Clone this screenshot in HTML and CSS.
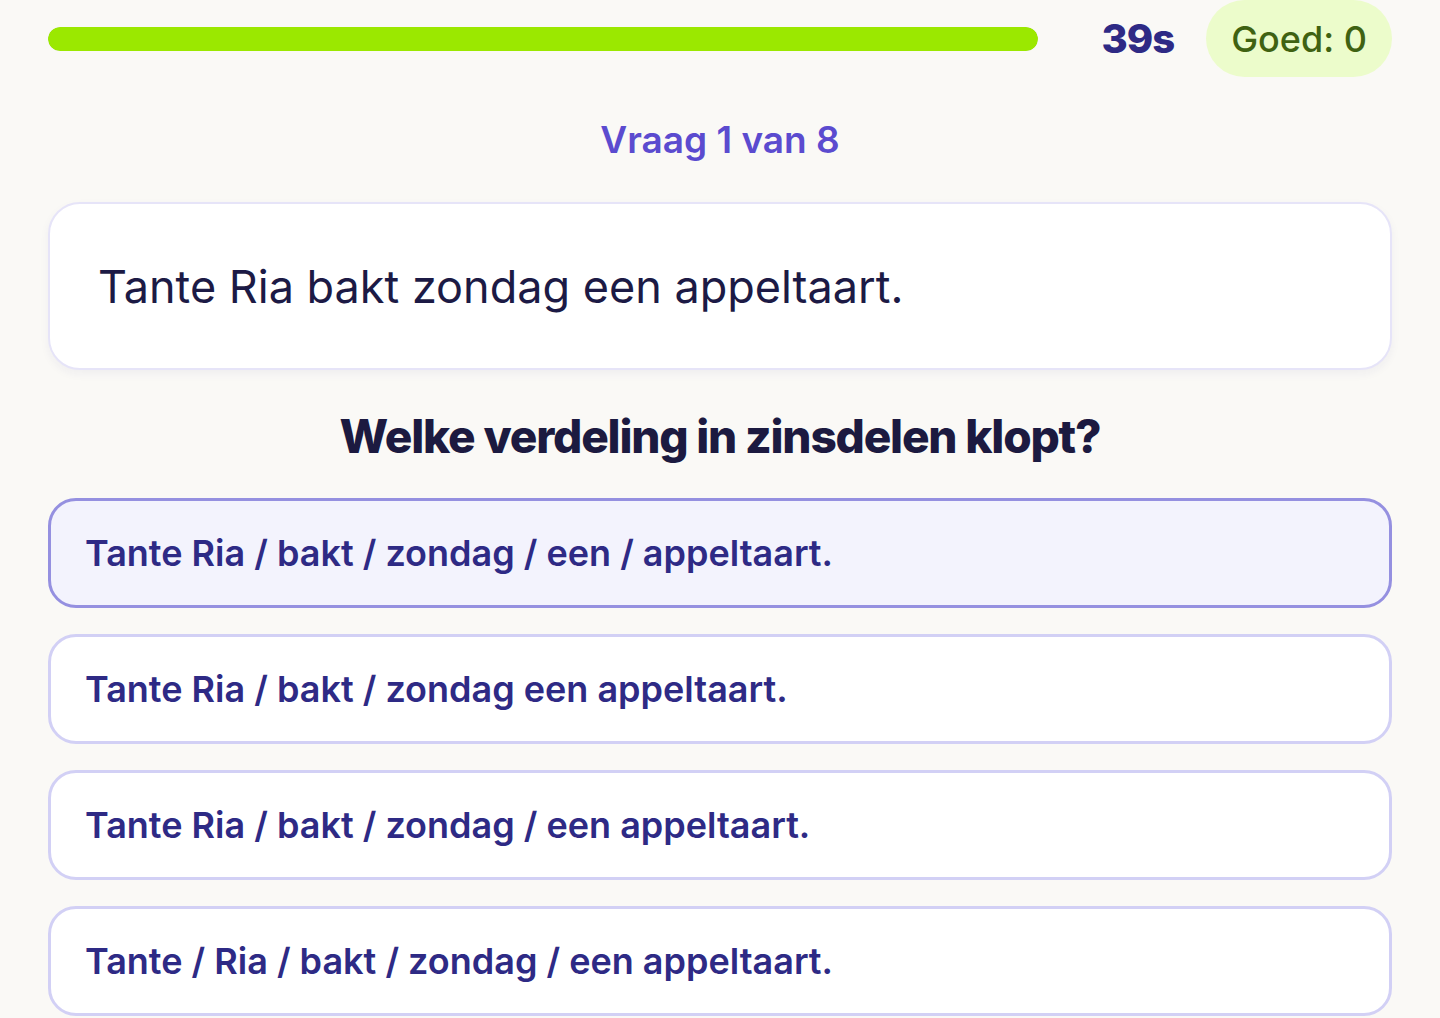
FILE: index.html
```
<!DOCTYPE html>
<html lang="nl">
<head>
    <meta charset="UTF-8">
    <title>Zinsdelen quiz</title>
    <link rel="stylesheet" href="styles.css">
</head>
<body>
<div class="quiz">
    <div class="top-bar">
        <div class="progress">
            <div class="progress-fill" style="width: 100%"></div>
        </div>
        <span class="timer">39s</span>
        <span class="score">Goed: 0</span>
    </div>

    <p class="counter">Vraag 1 van 8</p>

    <div class="sentence-card">Tante Ria bakt zondag een appeltaart.</div>

    <h2 class="prompt">Welke verdeling in zinsdelen klopt?</h2>

    <ul class="options">
        <li class="option selected">Tante Ria / bakt / zondag / een / appeltaart.</li>
        <li class="option">Tante Ria / bakt / zondag een appeltaart.</li>
        <li class="option">Tante Ria / bakt / zondag / een appeltaart.</li>
        <li class="option">Tante / Ria / bakt / zondag / een appeltaart.</li>
    </ul>
</div>
</body>
</html>
```

FILE: styles.css
```
html, body {
    margin: 0;
    padding: 0;
}

body {
    background-color: #faf9f6;
    font-family: Inter, "Noto Sans", sans-serif;
    color: #1c1a45;
}

.quiz {
    padding: 0 48px;
}

.top-bar {
    display: flex;
    align-items: center;
    height: 77px;
}

.progress {
    flex: 1;
    height: 24px;
    border-radius: 12px;
    background-color: #e8e6f0;
    overflow: hidden;
}

.progress-fill {
    height: 100%;
    border-radius: 12px;
    background-color: #9be800;
}

.timer {
    margin-left: 64px;
    font-size: 40px;
    font-weight: 800;
    letter-spacing: -1px;
    color: #2e2a85;
}

.score {
    display: flex;
    align-items: center;
    height: 77px;
    margin-left: 32px;
    padding: 0 25px;
    border-radius: 39px;
    background-color: #ecfccb;
    color: #3f6212;
    font-size: 36px;
    font-weight: 500;
}

.counter {
    margin: 42px 0 0;
    text-align: center;
    font-size: 37px;
    font-weight: 600;
    line-height: 42px;
    color: #5b4bcf;
}

.sentence-card {
    margin-top: 41px;
    height: 168px;
    box-sizing: border-box;
    display: flex;
    align-items: center;
    padding: 0 48px;
    border: 2px solid #e6e4f8;
    border-radius: 32px;
    background-color: #fff;
    box-shadow: 0 4px 10px rgba(40, 30, 120, .05);
    font-size: 45px;
    color: #1c1a45;
}

.prompt {
    margin: 38px 0 0;
    text-align: center;
    font-size: 46px;
    font-weight: 800;
    line-height: 56px;
    letter-spacing: -1.2px;
    color: #1c1a40;
}

.options {
    list-style: none;
    margin: 34px 0 0;
    padding: 0;
    display: flex;
    flex-direction: column;
    gap: 26px;
}

.option {
    height: 110px;
    box-sizing: border-box;
    display: flex;
    align-items: center;
    padding: 0 34px;
    border: 3px solid #d2d0f5;
    border-radius: 28px;
    background-color: #fff;
    font-size: 36px;
    font-weight: 600;
    color: #2e2a85;
    cursor: pointer;
}

.option.selected {
    border-color: #9590e0;
    background-color: #f3f3fd;
}
```
